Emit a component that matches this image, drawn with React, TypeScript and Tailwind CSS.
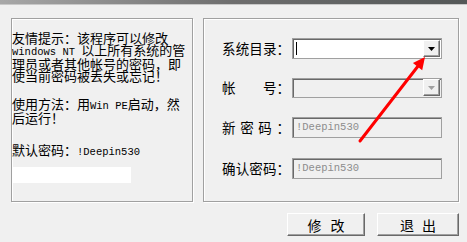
import React from "react";

const cjk = "font-['Noto_Sans_CJK_SC','Noto_Sans_CJK_JP',sans-serif]";
const mono = "font-['Liberation_Mono',monospace] text-[10.5px]";

const etched =
  "border border-[#a0a0a0] shadow-[inset_1px_1px_0_#ffffff,1px_1px_0_#ffffff]";
const sunken =
  "border border-[#a0a0a0] shadow-[inset_1px_1px_0_#696969]";
const raised =
  "border border-t-white border-l-white border-b-[#696969] border-r-[#696969] shadow-[inset_-1px_-1px_0_#a0a0a0]";

const Arrow = ({ disabled }: { disabled?: boolean }) => (
  <div
    className={`w-[17px] h-[17px] bg-[#f0f0f0] flex items-center justify-center ${raised}`}
  >
    <svg width="7" height="4" viewBox="0 0 7 4">
      <polygon points="0,0 7,0 3.5,4" fill={disabled ? "#a0a0a0" : "#000"} />
    </svg>
  </div>
);

const Row = ({
  label,
  children,
  className,
}: {
  label: React.ReactNode;
  children: React.ReactNode;
  className?: string;
}) => (
  <div className={`flex items-center h-[21px] ${className ?? ""}`}>
    <div className="w-[70px] flex justify-between pr-[2px] text-[13.5px] leading-none">
      {label}
    </div>
    {children}
  </div>
);

const Field = ({ value }: { value: string }) => (
  <div
    className={`w-[150px] h-[21px] bg-[#f0f0f0] flex items-center pl-[3px] ${sunken}`}
  >
    <span className={`${mono} text-[#8d8d8d]`}>{value}</span>
  </div>
);

export default function App() {
  return (
    <div
      className={`relative w-[467px] h-[242px] overflow-hidden bg-[#f0f0f0] text-black ${cjk}`}
    >
      <div className="h-[5px] bg-linear-to-r from-[#a8a8a8] via-[#6e6e6e] to-[#545858] border-b border-[#c8c8c8]" />

      <div className="flex gap-[10px] pl-[11px] pt-[13px]">
        {/* left info panel */}
        <div className={`w-[182px] h-[184px] pt-[13px] text-[13px] ${etched}`}>
          <div className="leading-[12px] whitespace-nowrap">
            <div>友情提示：该程序可以修改</div>
            <div>
              <span className={mono}>windows NT </span>以上所有系统的管
            </div>
            <div>理员或者其他帐号的密码，即</div>
            <div>使当前密码被丢失或忘记！</div>
          </div>
          <div className="mt-[16px] leading-[12px] whitespace-nowrap">
            <div>
              使用方法：用<span className={mono}>Win PE</span>启动，然
            </div>
            <div>后运行！</div>
          </div>
          <div className="mt-[20px] leading-[12px] whitespace-nowrap">
            默认密码：<span className={mono}>!Deepin530</span>
          </div>
          <div className="mt-[9px] w-[119px] h-[16px] bg-white" />
        </div>

        {/* right form panel */}
        <div className={`w-[256px] h-[184px] pt-[19px] pl-[18px] ${etched}`}>
          <Row
            label={
              <>
                <span>系</span>
                <span>统</span>
                <span>目</span>
                <span>录</span>
                <span>：</span>
              </>
            }
          >
            <div
              className={`w-[150px] h-[21px] bg-white flex items-center justify-between pl-[3px] pr-[1px] ${sunken}`}
            >
              <div className="w-px h-[13px] bg-black" />
              <Arrow />
            </div>
          </Row>
          <Row
            className="mt-[18px]"
            label={
              <>
                <span>帐</span>
                <span>号：</span>
              </>
            }
          >
            <div
              className={`w-[150px] h-[20px] bg-[#f0f0f0] flex items-center justify-end pr-[1px] ${sunken}`}
            >
              <Arrow disabled />
            </div>
          </Row>
          <Row
            className="mt-[19px]"
            label={
              <>
                <span>新</span>
                <span>密</span>
                <span>码</span>
                <span>：</span>
              </>
            }
          >
            <Field value="!Deepin530" />
          </Row>
          <Row
            className="mt-[20px]"
            label={
              <>
                <span>确</span>
                <span>认</span>
                <span>密</span>
                <span>码</span>
                <span>：</span>
              </>
            }
          >
            <Field value="!Deepin530" />
          </Row>
        </div>
      </div>

      <div className="flex justify-end gap-[12px] pr-[8px] mt-[11px]">
        <button
          className={`w-[78px] h-[23px] bg-[#f0f0f0] flex items-center justify-center gap-[9px] text-[14px] leading-none ${raised}`}
        >
          <span>修</span>
          <span>改</span>
        </button>
        <button
          className={`w-[82px] h-[23px] bg-[#f0f0f0] flex items-center justify-center gap-[8px] text-[14px] leading-none ${raised}`}
        >
          <span>退</span>
          <span>出</span>
        </button>
      </div>

      <svg
        className="absolute left-0 top-0 pointer-events-none"
        width="467"
        height="242"
        viewBox="0 0 467 242"
      >
        <line
          x1="360"
          y1="141"
          x2="418.5"
          y2="65.5"
          stroke="#ff0000"
          strokeWidth="3"
          strokeLinecap="round"
        />
        <polygon points="425,57 422.2,70.2 412.9,63" fill="#ff0000" />
      </svg>
    </div>
  );
}
